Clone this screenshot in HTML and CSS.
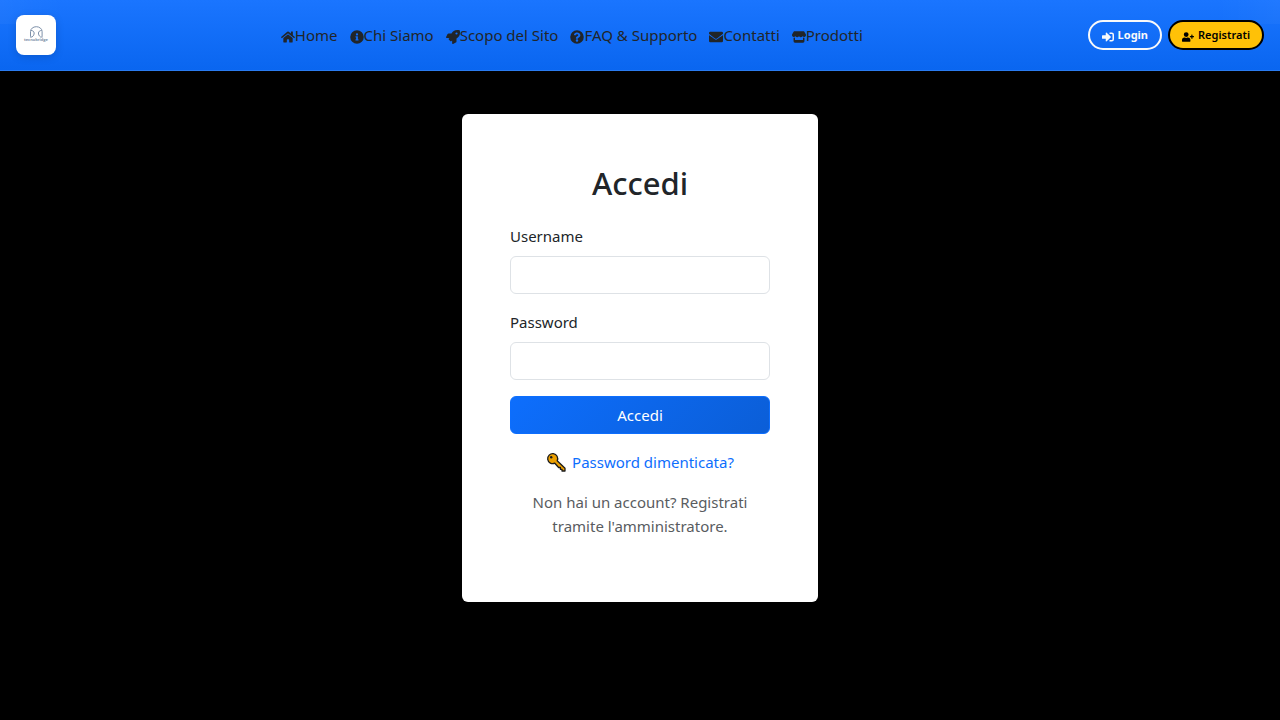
FILE: index.html
```html
<!DOCTYPE html>
<html lang="it">
<head>
<meta charset="utf-8">
<meta name="viewport" content="width=device-width, initial-scale=1">
<title>Accedi</title>
<link rel="stylesheet" href="styles.css">
</head>
<body>
<header class="topbar">
  <a class="brand" href="#" aria-label="tecnobridge">
    <svg viewBox="0 0 40 40" width="40" height="40" aria-hidden="true">
      <g fill="none" stroke="#7d90a9" stroke-width="1">
        <path d="M14.500 21.500V16.500a5.800 4.800 0 0 1 11.600 0v5"/>
        <path d="M15 15.500c4 0 4 4.500 1 6.500h-2M25.600 15.500c-4 0-4 4.500-1 6.500h2"/>
      </g>
      <text class="brand-name" x="20" y="26" text-anchor="middle">tecnobridge</text>
    </svg>
  </a>
  <nav class="nav">
    <a class="nav-link" href="#"><svg class="icon" viewBox="0 0 576 512"><path d="M280 148L96 300v164a16 16 0 0 0 16 16l112-.3a16 16 0 0 0 16-16V368a16 16 0 0 1 16-16h64a16 16 0 0 1 16 16v95.600a16 16 0 0 0 16 16.100L464 480a16 16 0 0 0 16-16V300L296 148a12 12 0 0 0-16 0zM571 251l-83-69V44a12 12 0 0 0-12-12h-56a12 12 0 0 0-12 12v72l-89-73a48 48 0 0 0-61 0L4 251a12 12 0 0 0-2 17l26 31a12 12 0 0 0 17 2l235-194a12 12 0 0 1 16 0l235 194a12 12 0 0 0 17-2l25-31a12 12 0 0 0-2-17z"/></svg><span>Home</span></a>
    <a class="nav-link" href="#"><svg class="icon" viewBox="0 0 512 512"><path fill-rule="evenodd" d="M256 8a248 248 0 1 0 0 496a248 248 0 1 0 0-496zm0 110a42 42 0 1 1 0 84a42 42 0 1 1 0-84zm56 254a12 12 0 0 1-12 12h-88a12 12 0 0 1-12-12v-24a12 12 0 0 1 12-12h12v-64h-12a12 12 0 0 1-12-12v-24a12 12 0 0 1 12-12h64a12 12 0 0 1 12 12v100h12a12 12 0 0 1 12 12z"/></svg><span>Chi Siamo</span></a>
    <a class="nav-link" href="#"><svg class="icon" viewBox="0 0 512 512"><path fill-rule="evenodd" d="M505 19c-1-5-6-11-12-12C461 0 436 0 411 0 308 0 246 55 200 128H95c-16 0-35 12-43 26L3 253c-2 3-3 8-3 11a24 24 0 0 0 24 24h104l-22 22a32 32 0 0 0 0 45l51 51a32 32 0 0 0 45 0l22-22v104a24 24 0 0 0 24 24c3 0 8-1 11-3l99-49c14-7 26-27 26-43V312c73-46 128-108 128-211 0-25 0-51-7-82zM384 168a40 40 0 1 1 0-80a40 40 0 0 1 0 80z"/></svg><span>Scopo del Sito</span></a>
    <a class="nav-link" href="#"><svg class="icon" viewBox="0 0 512 512"><path fill-rule="evenodd" d="M504 256a248 248 0 1 1-496 0a248 248 0 1 1 496 0zM263 90c-55 0-89 23-117 64a12 12 0 0 0 3 16l34 27a12 12 0 0 0 17-3c18-23 30-36 57-36 21 0 46 14 46 34 0 15-12 23-33 34-24 13-55 30-55 72v6a12 12 0 0 0 12 12h57a12 12 0 0 0 12-12v-3c0-29 84-31 84-109 0-59-62-102-117-102zm-7 248a46 46 0 1 0 0 92a46 46 0 1 0 0-92z"/></svg><span>FAQ &amp; Supporto</span></a>
    <a class="nav-link" href="#"><svg class="icon" viewBox="0 0 512 512"><path d="M502 191c4-3 10 0 10 5v204a48 48 0 0 1-48 48H48a48 48 0 0 1-48-48V196c0-5 6-8 10-5 22 17 52 39 154 114 21 15 57 48 92 48s72-33 92-48c102-75 132-97 154-114zM256 320c23 0 56-29 73-41 133-96 143-105 174-129a24 24 0 0 0 9-19v-19a48 48 0 0 0-48-48H48a48 48 0 0 0-48 48v19a24 24 0 0 0 9 19c31 24 41 33 174 129 17 12 50 41 73 41z"/></svg><span>Contatti</span></a>
    <a class="nav-link" href="#"><svg class="icon" viewBox="0 0 616 512"><path d="M602 119L537 15c-6-9-16-15-27-15H106C95 0 85 6 79 15L14 119c-33 53-4 128 59 136a103 103 0 0 0 78-34 104 104 0 0 0 157 0 104 104 0 0 0 157 0 103 103 0 0 0 78 34c63-8 92-83 59-136zM484 280v104H132V280a160 160 0 0 1-64 6v162a64 64 0 0 0 64 64h352a64 64 0 0 0 64-64V286a160 160 0 0 1-64-6z"/></svg><span>Prodotti</span></a>
  </nav>
  <div class="actions">
    <a class="pill pill-login" href="#"><svg class="pill-icon" viewBox="0 0 512 512"><path d="M416 448h-84a12 12 0 0 1-12-12v-40a12 12 0 0 1 12-12h84a32 32 0 0 0 32-32V160a32 32 0 0 0-32-32h-84a12 12 0 0 1-12-12V76a12 12 0 0 1 12-12h84a96 96 0 0 1 96 96v192a96 96 0 0 1-96 96zM369 239L201 71c-15-15-41-4-41 17v96H24a24 24 0 0 0-24 24v96a24 24 0 0 0 24 24h136v96c0 22 26 32 41 17l168-168a24 24 0 0 0 0-34z"/></svg><span>Login</span></a>
    <a class="pill pill-register" href="#"><svg class="pill-icon pill-icon-wide" viewBox="0 0 640 512"><path d="M624 208h-64v-64a16 16 0 0 0-16-16h-32a16 16 0 0 0-16 16v64h-64a16 16 0 0 0-16 16v32a16 16 0 0 0 16 16h64v64a16 16 0 0 0 16 16h32a16 16 0 0 0 16-16v-64h64a16 16 0 0 0 16-16v-32a16 16 0 0 0-16-16zM224 256a128 128 0 1 0 0-256a128 128 0 1 0 0 256zm90 32h-17a174 174 0 0 1-146 0h-17A134 134 0 0 0 0 422v42a48 48 0 0 0 48 48h352a48 48 0 0 0 48-48v-42a134 134 0 0 0-134-134z"/></svg><span>Registrati</span></a>
  </div>
</header>
<main class="page">
  <section class="card">
    <h1 class="title">Accedi</h1>
    <form class="form">
      <div class="field">
        <label for="username">Username</label>
        <input class="control" id="username" name="username" type="text">
      </div>
      <div class="field">
        <label for="password">Password</label>
        <input class="control" id="password" name="password" type="password">
      </div>
      <button class="submit" type="submit">Accedi</button>
    </form>
    <p class="forgot"><a class="forgot-link" href="#"><svg class="key" viewBox="0 0 20 20" aria-hidden="true"><path fill="#eb9f00" stroke="#1b1b1b" stroke-width="1.300" stroke-linejoin="round" d="M11.200 8.800L19 16.300V19h-3v-1.700h-1.600v-1.800h-1.800l-3.800-4.300A5 5 0 1 1 11.200 8.800z"/><circle cx="5.200" cy="5.200" r="1.200" fill="#1b1b1b"/></svg><span>Password dimenticata?</span></a></p>
    <p class="note">Non hai un account? Registrati tramite l'amministratore.</p>
  </section>
</main>
</body>
</html>
```
FILE: styles.css
```css
* {
  box-sizing: border-box;
}

body {
  margin: 0;
  min-height: 100vh;
  background: #000;
  color: #212529;
  font-family: "Segoe UI", "Noto Sans", sans-serif;
  font-size: 15px;
  line-height: 24px;
}

a {
  color: inherit;
  text-decoration: none;
}

.topbar {
  display: flex;
  align-items: center;
  justify-content: space-between;
  padding: 15px 16px;
  border-bottom: 1px solid #2a7bf0;
  background:
    linear-gradient(90deg, rgba(255, 255, 255, 0.03), transparent 5%, transparent 95%, rgba(255, 255, 255, 0.03)) 0 0 / 100% 24px no-repeat,
    linear-gradient(180deg, #1a75ff, #0a66f0);
}

.brand {
  display: flex;
  border-radius: 8px;
  background: #fff;
  box-shadow: 0 2px 8px rgba(0, 0, 0, 0.15);
}

.brand-name {
  font-family: "Open Sans", sans-serif;
  font-size: 4px;
  font-weight: 700;
  fill: #7d90a9;
}

.nav {
  display: flex;
  gap: 12px;
}

.nav-link {
  display: flex;
  align-items: center;
}

.icon {
  width: 14px;
  height: 14px;
  margin-top: 3px;
  fill: currentColor;
}

.actions {
  display: flex;
  gap: 6px;
}

.pill {
  display: flex;
  align-items: center;
  gap: 4px;
  height: 30px;
  padding: 0 12px;
  border: 2px solid;
  border-radius: 15px;
  font-size: 11px;
  font-weight: 600;
}

.pill-login {
  border-color: #f8f9fa;
  color: #f8f9fa;
  font-weight: 700;
}

.pill-register {
  border-color: #000;
  background: #ffc107;
  color: #000;
}

.pill-icon {
  width: 12px;
  height: 12px;
  margin-top: 3px;
  fill: currentColor;
}

.pill-icon-wide {
  height: 10px;
}

.page {
  display: flex;
  justify-content: center;
  padding: 43px 16px;
}

.card {
  width: 100%;
  max-width: 356px;
  padding: 48px 48px 64px;
  border-radius: 6px;
  background: #fff;
}

.title {
  margin: 0 0 20px;
  font-size: 31px;
  font-weight: 500;
  line-height: 42px;
  text-align: center;
}

.form {
  display: flex;
  flex-direction: column;
  gap: 16px;
}

.field {
  display: flex;
  flex-direction: column;
  gap: 8px;
}

.control {
  width: 100%;
  height: 38px;
  padding: 6px 12px;
  border: 1px solid #dee2e6;
  border-radius: 6px;
  background: #fff;
  font: inherit;
}

.submit {
  height: 38px;
  border: 1px solid #0d6efd;
  border-radius: 6px;
  background: linear-gradient(135deg, #0d6efd, #0b5ed7);
  color: #fff;
  font: inherit;
}

.forgot {
  margin: 16px 0;
  text-align: center;
}

.forgot-link {
  display: flex;
  align-items: center;
  justify-content: center;
  gap: 6px;
  color: #0d6efd;
}

.key {
  width: 20px;
  height: 20px;
}

.note {
  margin: 0;
  color: #595c5f;
  text-align: center;
}
```
